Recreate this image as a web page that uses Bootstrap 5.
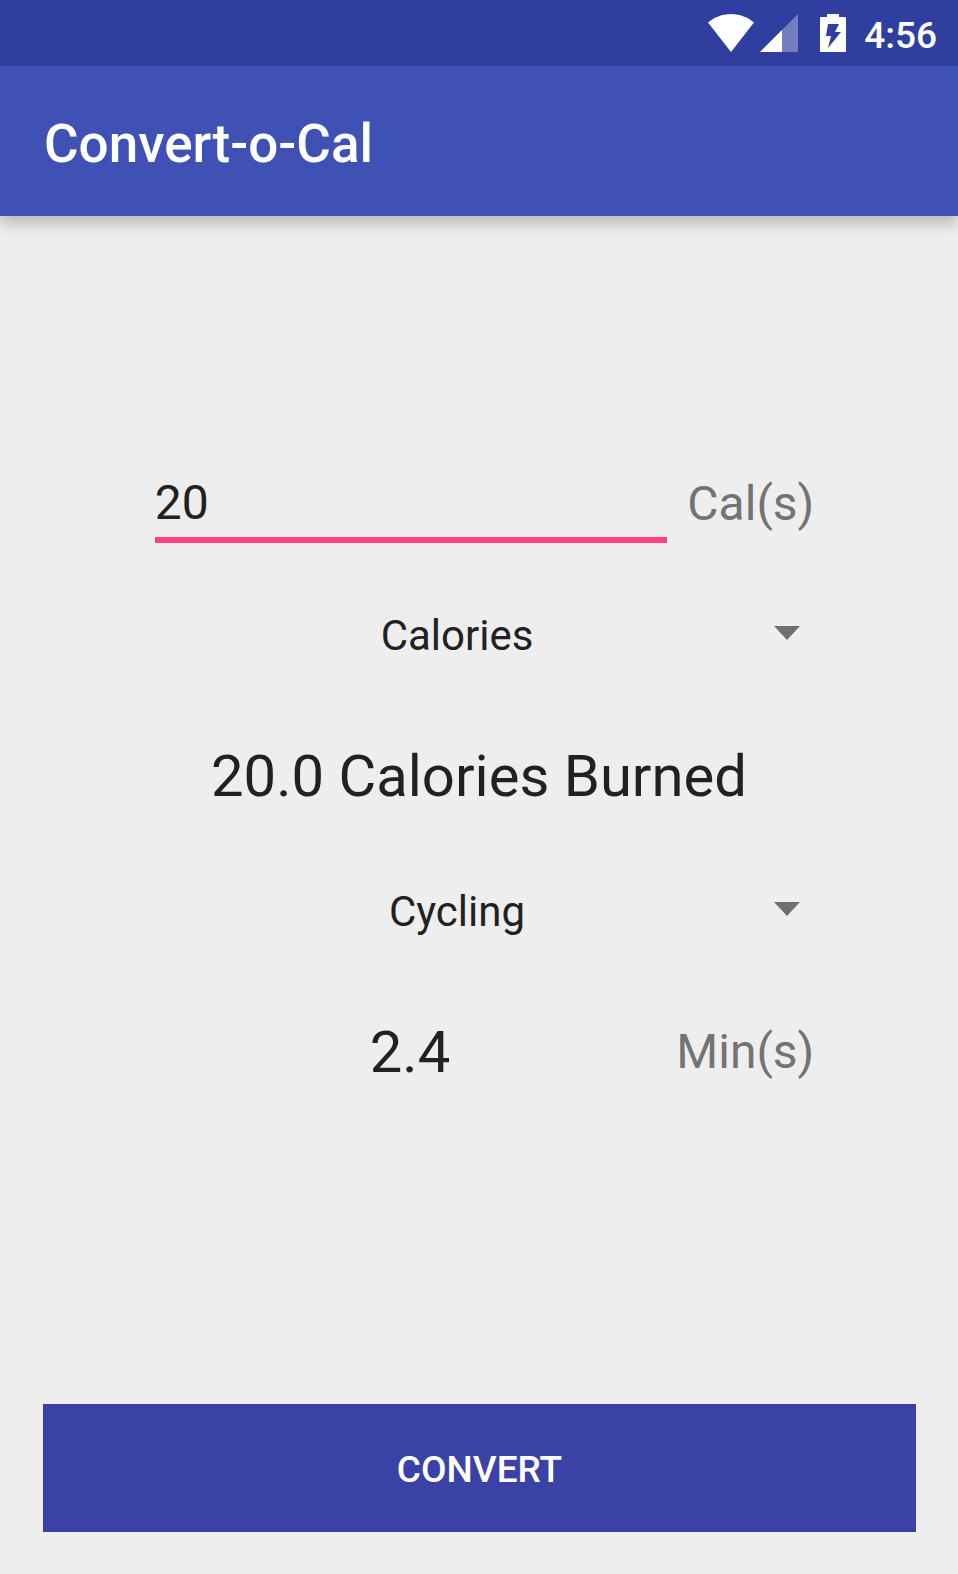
<!DOCTYPE html>
<html lang="en">
<head>
<meta charset="utf-8">
<meta name="viewport" content="width=device-width, initial-scale=1">
<title>Convert-o-Cal</title>
<link href="https://cdn.jsdelivr.net/npm/bootstrap@5.3.0/dist/css/bootstrap.min.css" rel="stylesheet">
<style>
  body { font-family: Roboto, sans-serif; background: #eee; color: #212121; }
  .status-bar { height: 66px; padding-right: 21px; z-index: 1; background: #303f9f; color: #fff; font-size: 37px; line-height: 44px; font-weight: 500; }
  .clock { padding-top: 6px; }
  .signal { margin-left: 6px; }
  .battery { margin: 0 18px 0 22px; }
  .app-bar { height: 150px; padding: 6px 44px 0; background: #3f51b5; box-shadow: 0 8px 14px rgba(0, 0, 0, .22); }
  .app-title { font-size: 53px; line-height: 64px; font-weight: 500; color: #fff; }
  .fields { width: 70%; gap: 60px; }
  .amount { height: 80px; margin-left: 11px; padding: 4px 0 0; border: 0; border-bottom: 6px solid #ff4081; border-radius: 0; font-size: 48px; line-height: 56px; }
  .amount, .amount:focus { background: transparent; color: #212121; box-shadow: none; }
  .amount:focus { border-color: #ff4081; }
  .unit { font-size: 48px; line-height: 70px; color: #737373; }
  .amount-unit { padding: 2px 0 0 20px; }
  .spinner { height: 64px; padding: 2px 44px 0 0; border: 0; font-size: 42px; line-height: 62px; color: #212121; text-align: center; text-align-last: center;
    background: transparent url("data:image/svg+xml,%3Csvg xmlns='http://www.w3.org/2000/svg' viewBox='0 0 26 18'%3E%3Cpath fill='%23707070' d='M0 0h26L13 14z'/%3E%3C/svg%3E") no-repeat right 14px center / 26px 18px; }
  .result { padding: 14px 0 8px; }
  .figure-text { font-size: 58px; line-height: 70px; }
  .actions { padding: 62px 42px 42px 43px; }
  .convert { height: 128px; padding: 4px 0 0; border: 0; border-radius: 0; font-size: 37px; font-weight: 500; color: #fff; background: #3b42a5; }
  .convert:hover { background: #303f9f; color: #fff; }
</style>
</head>
<body class="min-vh-100 d-flex flex-column">
  <div class="status-bar position-relative d-flex align-items-center justify-content-end">
    <svg width="46" height="38" viewBox="0 0 46 38" fill="#fff" role="img" aria-label="Wi-Fi"><path d="M0 8.500C6 3.500 14 0 23 0s17 3.500 23 8.500L23 38z"/></svg>
    <svg class="signal" width="38" height="38" viewBox="0 0 38 38" fill="#fff" role="img" aria-label="Signal"><path opacity=".33" d="M38 0v38H0z"/><path d="M22 16v22H0z"/></svg>
    <svg class="battery" width="26" height="38" viewBox="0 0 26 38" role="img" aria-label="Charging"><path fill="#fff" d="M7 0h12v3h6a1 1 0 0 1 1 1v34H0V4a1 1 0 0 1 1-1h6z"/><path fill="#303f9f" d="M8 10h11l-4 8h6L8 34l3-12H6z"/></svg>
    <span class="clock">4:56</span>
  </div>
  <header class="app-bar d-flex align-items-center">
    <h1 class="app-title m-0">Convert-o-Cal</h1>
  </header>
  <form class="flex-grow-1 d-flex flex-column" onsubmit="return false">
    <div class="fields flex-grow-1 mx-auto d-flex flex-column justify-content-center">
      <div class="d-flex align-items-center">
        <input id="amount" class="amount form-control flex-fill" type="text" inputmode="decimal" value="20">
        <label for="amount" class="unit amount-unit flex-shrink-0">Cal(s)</label>
      </div>
      <select class="spinner form-select" aria-label="Convert from">
        <option>Calories</option>
      </select>
      <output class="result figure-text text-center" for="amount">20.0 Calories Burned</output>
      <select class="spinner form-select" aria-label="Activity">
        <option>Cycling</option>
      </select>
      <div class="result d-flex align-items-center">
        <output id="minutes" class="figure-text flex-fill text-center">2.4</output>
        <label for="minutes" class="unit">Min(s)</label>
      </div>
    </div>
    <div class="actions">
      <button type="submit" class="convert btn w-100">CONVERT</button>
    </div>
  </form>
<script src="https://cdn.jsdelivr.net/npm/bootstrap@5.3.0/dist/js/bootstrap.bundle.min.js"></script>
</body>
</html>
